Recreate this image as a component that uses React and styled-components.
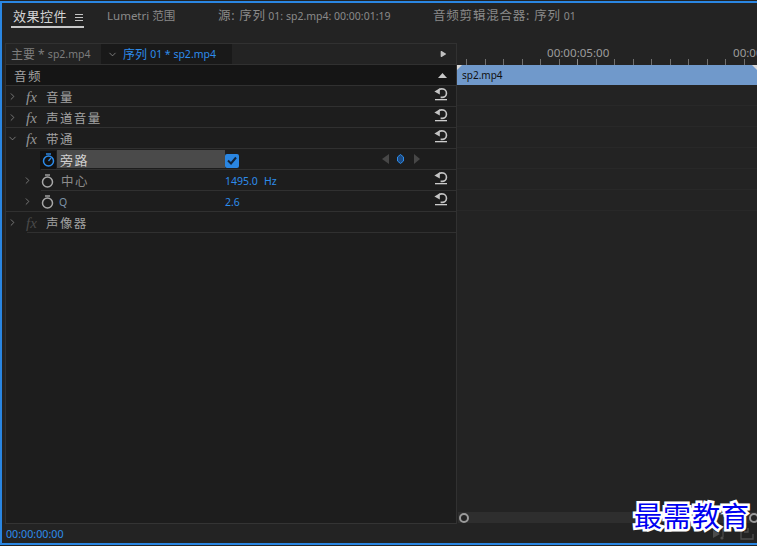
import React from 'react';
import styled, {createGlobalStyle} from 'styled-components';
import {ChevronRight, ChevronDown, Play} from 'lucide-react';

const FONT = '"Noto Sans", "Noto Sans CJK SC", sans-serif';
const BLUE = '#2d8ceb';

const GlobalStyle = createGlobalStyle`
    html, body {
        margin: 0;
        padding: 0;
        background: #232323;
    }
    body {
        width: 757px;
        height: 546px;
        overflow: hidden;
        font-family: ${FONT};
    }
`;

const Frame = styled.div`
    position: relative;
    box-sizing: border-box;
    width: 757px;
    height: 546px;
    padding-top: 1px;
    padding-bottom: 1px;
    overflow: hidden;
    background: #232323;
`;

const Panel = styled.div`
    box-sizing: border-box;
    height: 544px;
    border-top: 2px solid #2a86e2;
    border-bottom: 2px solid #2a86e2;
    border-left: 2px solid #2a86e2;
    display: flex;
    flex-direction: column;
`;

const TabBar = styled.div`
    height: 40px;
    flex: none;
    display: flex;
    align-items: flex-start;
    color: #8a8a8a;
    font-size: 12px;
`;

const Tab = styled.div`
    box-sizing: border-box;
    flex: none;
    width: ${p => p.$width}px;
    margin-left: ${p => p.$left || 0}px;
    height: 25px;
    padding-top: 4px;
    padding-left: ${p => p.$pad || 0}px;
    line-height: 18px;
    white-space: nowrap;
    letter-spacing: ${p => p.$spacing || 0}px;
    display: flex;
    align-items: flex-start;
    color: ${p => (p.$active ? '#d4d4d4' : '#8a8a8a')};
    border-bottom: ${p => (p.$active ? '2px solid #c8c8c8' : 'none')};
    font-size: ${p => p.$size || 12}px;
`;

const Menu = styled.span`
    display: block;
    flex: none;
    width: 8px;
    height: 5px;
    margin: 7px 0 0 8px;
    border-top: 1px solid #c4c4c4;
    border-bottom: 1px solid #c4c4c4;
    position: relative;
    &::after {
        content: '';
        position: absolute;
        left: 0;
        right: 0;
        top: 2px;
        height: 1px;
        background: #c4c4c4;
    }
`;

const Small = styled.span`
    font-size: 10.5px;
    letter-spacing: 0;
`;

const Body = styled.div`
    flex: 1;
    min-height: 0;
    display: grid;
    grid-template-columns: 452px 1fr;
    padding-left: 3px;
`;

const Controls = styled.div`
    box-sizing: border-box;
    height: 481px;
    background: #1d1d1d;
    border: 1px solid #313131;
    border-bottom: 1px solid #343434;
    display: flex;
    flex-direction: column;
`;

const SourceBar = styled.div`
    height: 20px;
    flex: none;
    display: flex;
    background: #232323;
    border-bottom: 1px solid #303030;
    position: relative;
`;

const SourceTab = styled.div`
    box-sizing: border-box;
    height: 20px;
    width: ${p => p.$width}px;
    padding-left: ${p => p.$pad}px;
    display: flex;
    align-items: center;
    white-space: nowrap;
    font-size: 12px;
    background: ${p => (p.$active ? '#191919' : 'transparent')};
    color: ${p => (p.$active ? BLUE : '#7d7d7d')};
`;

const Chevron = styled.span`
    width: ${p => p.$width}px;
    flex: none;
    display: flex;
    align-items: center;
    color: ${p => p.$color || '#9a9a9a'};
`;

const BarEnd = styled.span`
    margin-left: auto;
    padding-right: 9px;
    display: flex;
    align-items: center;
    color: #c0c0c0;
`;

const Row = styled.div`
    box-sizing: border-box;
    height: 21px;
    flex: none;
    display: flex;
    align-items: center;
    position: relative;
    background: ${p => (p.$header ? '#151515' : 'transparent')};
    padding-left: ${p => p.$indent || 0}px;
    &::after {
        content: '';
        position: absolute;
        right: 0;
        bottom: 0;
        left: ${p => p.$line || 0}px;
        height: 1px;
        background: #303030;
    }
`;

const Toggle = styled.span`
    flex: none;
    width: 20px;
    padding-left: ${p => p.$pad || 1}px;
    box-sizing: border-box;
    display: flex;
    align-items: center;
    color: #969696;
`;

const Fx = styled.span`
    flex: none;
    width: 20px;
    font-family: "Liberation Serif", serif;
    font-style: italic;
    font-size: 15px;
    line-height: 14px;
    color: ${p => (p.$dim ? '#4a4a4a' : '#969696')};
`;

const Label = styled.span`
    flex: none;
    width: ${p => p.$width || 'auto'};
    font-size: 12.5px;
    letter-spacing: 1.4px;
    color: ${p => p.$color || '#a2a2a2'};
    white-space: nowrap;
`;

const ResetSlot = styled.span`
    position: absolute;
    right: 8px;
    top: 1px;
    display: flex;
`;

const WatchSlot = styled.span`
    box-sizing: border-box;
    flex: none;
    width: 16px;
    height: 18px;
    display: flex;
    align-items: center;
    justify-content: center;
    margin-right: ${p => p.$gap || 0}px;
    background: ${p => (p.$on ? '#111' : 'transparent')};
`;

const Highlight = styled.div`
    box-sizing: border-box;
    width: 168px;
    height: 18px;
    flex: none;
    padding-left: 3px;
    margin-bottom: 1px;
    display: flex;
    align-items: center;
    background: #4a4a4a;
    color: #d0d0d0;
    font-size: 13px;
    letter-spacing: 1.4px;
`;

const CheckBox = styled.span`
    flex: none;
    width: 14px;
    height: 14px;
    margin-top: 2px;
    border-radius: 2px;
    background: #2a86e2;
    display: flex;
    align-items: center;
    justify-content: center;
`;

const Keyframes = styled.span`
    position: absolute;
    left: 376px;
    top: 5px;
    display: flex;
`;

const Value = styled.span`
    flex: none;
    width: ${p => p.$width};
    color: ${BLUE};
    font-size: 10.5px;
    white-space: nowrap;
`;

const Timeline = styled.div`
    height: 481px;
    display: flex;
    flex-direction: column;
`;

const Ruler = styled.div`
    height: 22px;
    flex: none;
    position: relative;
    color: #9c9c9c;
    font-size: 11.6px;
    line-height: 14px;
`;

const RulerTime = styled.span`
    position: absolute;
    top: 3px;
    left: ${p => p.$left}px;
    white-space: nowrap;
`;

const Clip = styled.div`
    box-sizing: border-box;
    height: 20px;
    flex: none;
    position: relative;
    padding-left: 5px;
    background: #7099cb;
    color: #101010;
    font-size: 10px;
    line-height: 20px;
    &::before,
    &::after {
        content: '';
        position: absolute;
        top: 0;
        border-top: 5px solid #d8d8d8;
    }
    &::before {
        left: 0;
        border-right: 5px solid transparent;
    }
    &::after {
        right: 0;
        border-left: 5px solid transparent;
    }
`;

const Lane = styled.div`
    height: 21px;
    flex: none;
    box-sizing: border-box;
    border-bottom: 1px solid #282828;
`;

const Spacer = styled.div`
    flex: 1;
`;

const ScrollTrack = styled.div`
    height: 11px;
    margin-bottom: 1px;
    margin-left: 1px;
    flex: none;
    background: #2e2e2e;
    position: relative;
`;

const Handle = styled.span`
    position: absolute;
    top: 1px;
    left: ${p => p.$left}px;
    box-sizing: border-box;
    width: 10px;
    height: 10px;
    border: 2.5px solid #9a9a9a;
    border-radius: 50%;
    background: #232323;
`;

const StatusBar = styled.div`
    height: 20px;
    flex: none;
    position: absolute;
    left: 6px;
    bottom: 2px;
    display: flex;
    align-items: center;
    font-size: 10.7px;
    color: ${BLUE};
`;

const Watermark = styled.div`
    position: absolute;
    left: 634px;
    top: 496px;
    font-family: "Noto Sans CJK SC", sans-serif;
    font-weight: 400;
    font-size: 28px;
    line-height: 38px;
    letter-spacing: 1px;
    color: #0000f0;
    white-space: nowrap;
    -webkit-text-stroke: 5px #fff;
    paint-order: stroke fill;
`;

const CornerIcons = styled.div`
    position: absolute;
    left: 713px;
    top: 528px;
    display: flex;
    gap: 13px;
    color: #4d4d4d;
`;

const Reset = () => (
    <svg width="14" height="14" viewBox="0 0 14 14" fill="none">
        <path d="M4.6 3 Q6.5 1.6 8.4 1.9 A4.2 4.2 0 0 1 8 10.4 H6.6" stroke="#c4c4c4" strokeWidth="1.6" />
        <path d="M5.8 1.2 V7.4 L.4 4.4 Z" fill="#c4c4c4" />
        <rect x="1" y="12" width="12" height="1.3" fill="#cccccc" />
    </svg>
);

const Stopwatch = ({color = '#a8a8a8'}) => (
    <svg width="13" height="14" viewBox="0 0 13 14" fill="none">
        <circle cx="6.5" cy="8" r="5" stroke={color} strokeWidth="1.5" />
        <path d="M4 1 H9" stroke={color} strokeWidth="1.4" />
        {color !== '#a8a8a8' && <path d="M6.5 8 L9 5" stroke={color} strokeWidth="1.2" />}
    </svg>
);

const Ticks = () => {
    const ticks = [];
    for (let i = 0; i < 16; i++) {
        ticks.push(9 + i * 18.53);
    }
    return (
        <svg width="300" height="22" style={{position: 'absolute', left: 0, top: 0}}>
            {ticks.map((x, i) => (
                <rect key={i} x={Math.round(x)} y={16} width="1" height={6} fill={i === 6 ? '#8a8a8a' : '#707070'} />
            ))}
        </svg>
    );
};

const ExpandIcon = ({open}) => (open
    ? <ChevronDown size={11} strokeWidth={1.6} />
    : <ChevronRight size={11} strokeWidth={1.6} />);

const App = () => {
    return (
        <Frame>
            <GlobalStyle />
            <Panel>
                <TabBar>
                    <Tab $width={73} $left={9} $pad={2} $active $size={13} $spacing={0.5}>
                        效果控件<Menu />
                    </Tab>
                    <Tab $width={111} $left={23} $size={11.5}>Lumetri 范围</Tab>
                    <Tab $width={215} $size={12.5} $spacing={0.7}>源: 序列 <Small>&nbsp;01: sp2.mp4: 00:00:01:19</Small></Tab>
                    <Tab $width={200} $size={12.5} $spacing={0.8}>音频剪辑混合器: 序列 <Small>&nbsp;01</Small></Tab>
                </TabBar>
                <Body>
                    <Controls>
                        <SourceBar>
                            <SourceTab $width={95} $pad={5}>主要 *&nbsp;<Small>sp2.mp4</Small></SourceTab>
                            <SourceTab $width={131} $pad={6} $active>
                                <Chevron $width={16}><ChevronDown size={11} strokeWidth={1.6} /></Chevron>
                                序列&nbsp;<Small>01 * sp2.mp4</Small>
                            </SourceTab>
                            <BarEnd><Play size={8} fill="currentColor" strokeWidth={0} /></BarEnd>
                        </SourceBar>
                        <Row $header $indent={8}>
                            <Label>音频</Label>
                            <BarEnd>
                                <svg width="9" height="6" viewBox="0 0 9 6"><path d="M4.5 0 L9 5 H0 Z" fill="#c8c8c8" /></svg>
                            </BarEnd>
                        </Row>
                        <Row>
                            <Toggle><ExpandIcon /></Toggle>
                            <Fx>fx</Fx>
                            <Label>音量</Label>
                            <ResetSlot><Reset /></ResetSlot>
                        </Row>
                        <Row>
                            <Toggle><ExpandIcon /></Toggle>
                            <Fx>fx</Fx>
                            <Label>声道音量</Label>
                            <ResetSlot><Reset /></ResetSlot>
                        </Row>
                        <Row $line={21}>
                            <Toggle><ExpandIcon open /></Toggle>
                            <Fx>fx</Fx>
                            <Label>带通</Label>
                            <ResetSlot><Reset /></ResetSlot>
                        </Row>
                        <Row $indent={34} $line={35}>
                            <WatchSlot $on $gap={1}><Stopwatch color="#2d8ceb" /></WatchSlot>
                            <Highlight>旁路</Highlight>
                            <CheckBox>
                                <svg width="10" height="9" viewBox="0 0 10 9" fill="none">
                                    <path d="M1 4.5 L4 7.5 L9 1.5" stroke="#10233a" strokeWidth="2" />
                                </svg>
                            </CheckBox>
                            <Keyframes>
                                <svg width="40" height="10" viewBox="0 0 40 10">
                                    <path d="M7 0 V10 L0 5 Z" fill="#474747" />
                                    <path d="M15.5 3 L18.5 .5 L21.5 3 V7 L18.5 9.5 L15.5 7 Z" fill="#1d4a80" stroke="#2d8ceb" strokeWidth="1" />
                                    <path d="M32 0 V10 L38 5 Z" fill="#474747" />
                                </svg>
                            </Keyframes>
                        </Row>
                        <Row $indent={13} $line={35}>
                            <Toggle $pad={3}><ExpandIcon /></Toggle>
                            <WatchSlot $gap={6}><Stopwatch /></WatchSlot>
                            <Label $width="164px" $color="#8c8c8c">中心</Label>
                            <Value $width="39px">1495.0</Value>
                            <Value $width="auto">Hz</Value>
                            <ResetSlot><Reset /></ResetSlot>
                        </Row>
                        <Row $indent={13}>
                            <Toggle $pad={3}><ExpandIcon /></Toggle>
                            <WatchSlot $gap={4}><Stopwatch /></WatchSlot>
                            <Label $width="166px" $color="#7d93a8"><Small>Q</Small></Label>
                            <Value $width="39px">2.6</Value>
                            <ResetSlot><Reset /></ResetSlot>
                        </Row>
                        <Row $line={21}>
                            <Toggle><ExpandIcon /></Toggle>
                            <Fx $dim>fx</Fx>
                            <Label>声像器</Label>
                        </Row>
                    </Controls>
                    <Timeline>
                        <Ruler>
                            <RulerTime $left={90}>00:00:05:00</RulerTime>
                            <RulerTime $left={276}>00:00:10:00</RulerTime>
                            <Ticks />
                        </Ruler>
                        <Clip>sp2.mp4</Clip>
                        <Lane />
                        <Lane />
                        <Lane />
                        <Lane />
                        <Lane />
                        <Lane />
                        <Spacer />
                        <ScrollTrack>
                            <Handle $left={1} />
                            <Handle $left={291} />
                        </ScrollTrack>
                    </Timeline>
                </Body>
            </Panel>
            <StatusBar>00:00:00:00</StatusBar>
            <CornerIcons>
                <svg width="14" height="12" viewBox="0 0 14 12" fill="none">
                    <path d="M0 2 L7 6 L0 10 Z" fill="currentColor" />
                    <path d="M10 9 V1 L13 3" stroke="currentColor" strokeWidth="1.2" />
                    <circle cx="9" cy="10" r="1.6" fill="currentColor" />
                </svg>
                <svg width="14" height="12" viewBox="0 0 14 12" fill="none">
                    <path d="M1 3 V11 H13 V6 M4 4 H8 V0" stroke="currentColor" strokeWidth="1.3" />
                </svg>
            </CornerIcons>
            <Watermark>最需教育</Watermark>
        </Frame>
    );
};

export default App;
